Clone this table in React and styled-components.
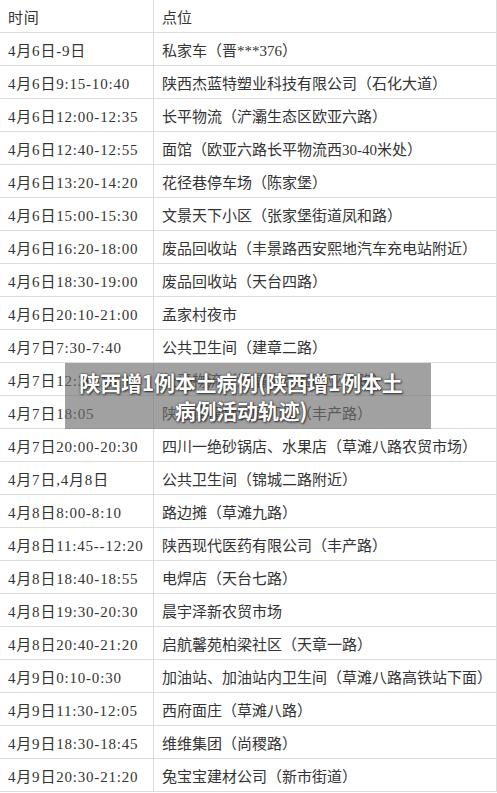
import React from "react";
import styled, { createGlobalStyle } from "styled-components";

const Global = createGlobalStyle`
  html, body { margin: 0; padding: 0; background: #fff; }
  * { box-sizing: border-box; }
`;

const Page = styled.div`
  position: relative;
  width: 497px;
  height: 793px;
  overflow: hidden;
  background: #fff;
`;

const Table = styled.div`
  display: flex;
  flex-direction: column;
  width: 497px;
  border-right: 1px solid #dcdcdc;
  font-family: "Liberation Serif", "Noto Sans CJK SC", serif;
  font-size: 15px;
  color: #333;
`;

const Row = styled.div`
  display: grid;
  grid-template-columns: 154px 1fr;
  height: 33px;
  border-bottom: 1px solid #dcdcdc;
`;

const Cell = styled.div`
  display: flex;
  align-items: center;
  padding: 0 8px;
  white-space: nowrap;
  overflow: hidden;
  letter-spacing: ${(p) => (p.$first ? "0.8px" : "0")};
  border-right: ${(p) => (p.$first ? "1px solid #dcdcdc" : "none")};
`;

const Banner = styled.div`
  position: absolute;
  left: 65px;
  top: 363px;
  width: 366px;
  height: 66px;
  padding: 5px 18px 5px 4px;
  background: rgba(110, 110, 110, 0.65);
  color: #fff;
  font-family: "Noto Sans CJK SC", "Noto Sans", sans-serif;
  font-weight: 700;
  font-size: 21px;
  line-height: 28px;
  text-align: center;
  text-shadow: 0 0 2px rgba(30, 30, 30, 0.95), 1px 1px 2px rgba(30, 30, 30, 0.8);
  letter-spacing: -0.2px;
`;

const rows = [
  ["时间", "点位"],
  ["4月6日-9日", "私家车（晋***376）"],
  ["4月6日9:15-10:40", "陕西杰蓝特塑业科技有限公司（石化大道）"],
  ["4月6日12:00-12:35", "长平物流（浐灞生态区欧亚六路）"],
  ["4月6日12:40-12:55", "面馆（欧亚六路长平物流西30-40米处）"],
  ["4月6日13:20-14:20", "花径巷停车场（陈家堡）"],
  ["4月6日15:00-15:30", "文景天下小区（张家堡街道凤和路）"],
  ["4月6日16:20-18:00", "废品回收站（丰景路西安熙地汽车充电站附近）"],
  ["4月6日18:30-19:00", "废品回收站（天台四路）"],
  ["4月6日20:10-21:00", "孟家村夜市"],
  ["4月7日7:30-7:40", "公共卫生间（建章二路）"],
  ["4月7日12:30-13:35", "长平物流（浐灞生态区欧亚六路）"],
  ["4月7日18:05", "陕西德福物流园门口（丰产路）"],
  ["4月7日20:00-20:30", "四川一绝砂锅店、水果店（草滩八路农贸市场）"],
  ["4月7日,4月8日", "公共卫生间（锦城二路附近）"],
  ["4月8日8:00-8:10", "路边摊（草滩九路）"],
  ["4月8日11:45--12:20", "陕西现代医药有限公司（丰产路）"],
  ["4月8日18:40-18:55", "电焊店（天台七路）"],
  ["4月8日19:30-20:30", "晨宇泽新农贸市场"],
  ["4月8日20:40-21:20", "启航馨苑柏梁社区（天章一路）"],
  ["4月9日0:10-0:30", "加油站、加油站内卫生间（草滩八路高铁站下面）"],
  ["4月9日11:30-12:05", "西府面庄（草滩八路）"],
  ["4月9日18:30-18:45", "维维集团（尚稷路）"],
  ["4月9日20:30-21:20", "兔宝宝建材公司（新市街道）"],
];

export default function App() {
  return (
    <Page>
      <Global />
      <Table>
        {rows.map(([t, p], i) => (
          <Row key={i}>
            <Cell $first>{t}</Cell>
            <Cell>{p}</Cell>
          </Row>
        ))}
      </Table>
      <Banner>
        陕西增1例本土病例(陕西增1例本土
        <br />
        病例活动轨迹)
      </Banner>
    </Page>
  );
}
